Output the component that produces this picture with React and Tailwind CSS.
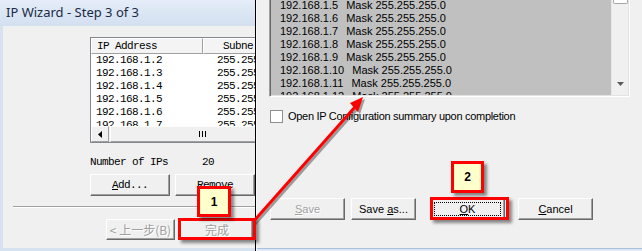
import React from "react";

const leftRows = ["192.168.1.2", "192.168.1.3", "192.168.1.4", "192.168.1.5", "192.168.1.6", "192.168.1.7"];
const rightRows = ["5", "6", "7", "8", "9", "10", "11", "12"];

function Btn({ children, className = "", disabled, focus }) {
  return (
    <div
      className={`h-[22px] shrink-0 flex items-center justify-center bg-[#f0f0f0] border border-t-white border-l-white border-r-[#696969] border-b-[#696969] shadow-[inset_-1px_-1px_0_#a0a0a0] ${disabled ? "text-[#a0a0a0]" : "text-black"} ${className}`}
    >
      {focus ? (
        <div className="w-[calc(100%-6px)] h-[calc(100%-6px)] border border-dotted border-black flex items-center justify-center">
          {children}
        </div>
      ) : (
        children
      )}
    </div>
  );
}

function LeftWindow() {
  return (
    <div className="w-[255px] h-full shrink-0 flex flex-col overflow-hidden bg-[#d6e2f0]">
      <div className="h-[26px] shrink-0 flex items-center pl-[6px] bg-gradient-to-b from-[#e4edf8] to-[#d3e0f0] text-[13px] text-[#1b2a44] font-['Noto_Sans',sans-serif]">
        IP Wizard - Step 3 of 3
      </div>
      <div className="flex-1 ml-[3px] mb-[3px] bg-[#f0f0f0] flex flex-col font-['Liberation_Mono',monospace] text-[11px] tracking-[-0.6px] text-black">
        {/* list view, cut by the other window */}
        <div className="ml-[87px] mt-[11px] w-[165px] h-[106px] shrink-0 overflow-hidden">
          <div className="w-[220px] h-full border border-[#828790] flex flex-col bg-white">
            <div className="h-[16px] shrink-0 flex">
              <div className="w-[112px] h-full pl-[5px] flex items-center bg-[#f4f4f4] border border-t-white border-l-white border-r-[#a0a0a0] border-b-[#a0a0a0]">
                IP Address
              </div>
              <div className="w-[52px] h-full pl-[19px] flex items-center overflow-hidden whitespace-nowrap bg-[#f4f4f4] border border-t-white border-l-white border-b-[#a0a0a0] border-r-0">
                Subne
              </div>
            </div>
            <div className="flex-1 overflow-hidden">
              {leftRows.map((ip) => (
                <div key={ip} className="h-[13px] leading-[13px] flex whitespace-nowrap">
                  <span className="w-[112px] pl-[5px]">{ip}</span>
                  <span className="w-[52px] pl-[14px] overflow-hidden">255.255</span>
                </div>
              ))}
            </div>
            <div className="h-[16px] shrink-0 flex bg-[#f0f0f0]">
              <div className="w-[18px] h-full flex items-center justify-center border border-t-white border-l-white border-r-[#a0a0a0] border-b-[#a0a0a0]">
                <svg width="4" height="7" viewBox="0 0 4 7"><path d="M4 0 L0 3.5 L4 7Z" fill="#000" /></svg>
              </div>
              <div className="ml-[1px] flex-1 h-full flex items-center pl-[88px] gap-[2px] border border-t-white border-l-white border-r-[#a0a0a0] border-b-[#a0a0a0]">
                <div className="w-px h-[6px] bg-black" />
                <div className="w-px h-[6px] bg-black" />
                <div className="w-px h-[6px] bg-black" />
              </div>
            </div>
          </div>
        </div>
        <div className="ml-[87px] mt-[13px] h-[13px] leading-[13px] flex whitespace-nowrap">
          <span className="w-[112px]">Number of IPs</span>
          <span>20</span>
        </div>
        <div className="ml-[87px] mt-[5px] flex gap-[5px]">
          <Btn className="w-[80px]">
            <span><span className="underline">A</span>dd...</span>
          </Btn>
          <Btn className="w-[80px]">
            <span>Remove</span>
          </Btn>
        </div>
        <div className="ml-[10px] mt-[10px] h-[2px] shrink-0 border-t border-t-[#a0a0a0] border-b border-b-white" />
        <div className="ml-[103px] mt-[11px] flex gap-[6px] text-[12px] tracking-normal font-['Noto_Sans_CJK_SC',sans-serif]">
          <Btn disabled className="w-[69px] !h-[21px]">
            <span className="[text-shadow:1px_1px_0_#fff]">&lt; 上一步(B)</span>
          </Btn>
          <Btn disabled className="w-[72px] !h-[21px]">
            <span className="[text-shadow:1px_1px_0_#fff]">完成</span>
          </Btn>
        </div>
      </div>
    </div>
  );
}

function RightWindow() {
  return (
    <div className="flex-1 h-full flex flex-col bg-[#f0f0f0] border-l border-l-[#f7f9fc] font-['Liberation_Sans',Arial,sans-serif] text-[11px] text-black">
      <div className="flex-1 flex flex-col pl-[12px]">
        {/* list box */}
        <div className="w-[361px] h-[97px] shrink-0 flex border-l border-l-[#a0a0a0] border-r border-r-white border-b border-b-white shadow-[inset_1px_0_0_#696969,inset_-1px_-1px_0_#e3e3e3] pl-[1px] pr-[1px] pb-[1px]">
          <div className="flex-1 bg-[#c0c0c0] overflow-hidden pl-[9px]">
            <div className="-mt-[1px]">
              {rightRows.map((n) => (
                <div key={n} className="h-[13px] leading-[13px] flex gap-[8px] whitespace-nowrap">
                  <span>192.168.1.{n}</span>
                  <span>Mask 255.255.255.0</span>
                </div>
              ))}
            </div>
          </div>
          <div className="w-[17px] h-full bg-[#f0f0f0] flex flex-col items-center border-l border-l-[#e8e8e8]">
            <div className="w-[15px] h-[4px] bg-white border border-t-0 border-[#a8a8a8] rounded-b-[2px]" />
            <div className="flex-1" />
            <svg className="mb-[9px]" width="7" height="4" viewBox="0 0 7 4"><path d="M0 0 L7 0 L3.5 4Z" fill="#5a5a5a" /></svg>
          </div>
        </div>
        {/* checkbox */}
        <div className="mt-[13px] ml-[1px] flex items-center gap-[5px] h-[13px]">
          <div className="w-[13px] h-[13px] bg-white border border-[#8e8f8f]" />
          <span className="whitespace-nowrap tracking-[-0.3px]">Open IP Configuration summary upon completion</span>
        </div>
        {/* buttons */}
        <div className="mt-[75px] ml-[1px] flex">
          <Btn disabled className="w-[75px]">
            <span className="[text-shadow:1px_1px_0_#fff]"><span className="underline">S</span>ave</span>
          </Btn>
          <Btn className="w-[65px] ml-[6px]">
            <span>Save <span className="underline">a</span>s...</span>
          </Btn>
          <Btn focus className="w-[75px] ml-[14px]">
            <span><span className="underline">O</span>K</span>
          </Btn>
          <Btn className="w-[75px] ml-[13px]">
            <span><span className="underline">C</span>ancel</span>
          </Btn>
        </div>
      </div>
      <div className="h-[3px] shrink-0 border-t border-t-[#a9c1de] bg-[#dfe8f3]" />
    </div>
  );
}

export default function App() {
  return (
    <div className="relative w-[642px] h-[251px] overflow-hidden flex bg-[#f0f0f0]">
      <LeftWindow />
      <div className="w-px h-full shrink-0 bg-black" />
      <RightWindow />

      {/* annotations */}
      <svg className="absolute inset-0 pointer-events-none" width="642" height="251">
        <g transform="translate(2,2)" opacity="0.35">
          <line x1="253" y1="222" x2="355" y2="107" stroke="#000" strokeWidth="3" />
          <polygon points="363,97 350,103 358,112" fill="#000" />
        </g>
        <line x1="253" y1="222" x2="355" y2="107" stroke="#ff0000" strokeWidth="3" />
        <polygon points="363,97 350,103 358,112" fill="#ff0000" />
      </svg>
      <div className="absolute left-[178px] top-[218px] w-[78px] h-[22px] border-[3px] border-[#ff0000] shadow-[3px_3px_3px_rgba(0,0,0,0.45)]" />
      <div className="absolute left-[197px] top-[186px] w-[34px] h-[31px] border-[3px] border-[#ff0000] bg-[#ffffcc] shadow-[3px_3px_3px_rgba(0,0,0,0.45)] flex items-center justify-center font-['Liberation_Sans',Arial,sans-serif] text-[12px] font-bold text-black">
        1
      </div>
      <div className="absolute left-[430px] top-[197px] w-[79px] h-[23px] border-[3px] border-[#ff0000] shadow-[3px_3px_3px_rgba(0,0,0,0.45)]" />
      <div className="absolute left-[451px] top-[161px] w-[33px] h-[32px] border-[3px] border-[#ff0000] bg-[#ffffcc] shadow-[3px_3px_3px_rgba(0,0,0,0.45)] flex items-center justify-center font-['Liberation_Sans',Arial,sans-serif] text-[12px] font-bold text-black">
        2
      </div>
    </div>
  );
}
